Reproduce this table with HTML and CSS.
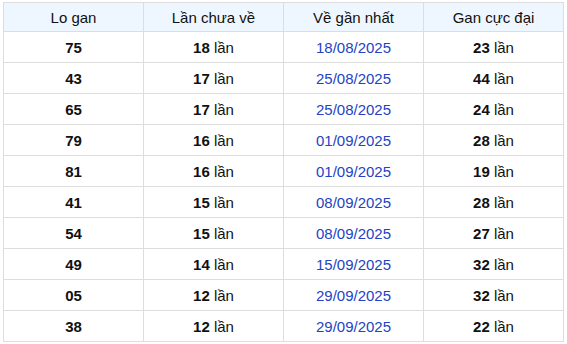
FILE: index.html
```html
<!DOCTYPE html>
<html lang="vi">
<head>
    <meta charset="UTF-8">
    <meta name="viewport" content="width=device-width, initial-scale=1.0">
    <title>Lo gan</title>
    <link rel="stylesheet" href="styles.css">
</head>
<body>
    <div class="wrap">
        <table class="gan-table">
            <thead>
                <tr>
                    <th>Lo gan</th>
                    <th>Lần chưa về</th>
                    <th>Về gần nhất</th>
                    <th>Gan cực đại</th>
                </tr>
            </thead>
            <tbody>
                <tr><td><b>75</b></td><td><b>18</b> lần</td><td class="date">18/08/2025</td><td><b>23</b> lần</td></tr>
                <tr><td><b>43</b></td><td><b>17</b> lần</td><td class="date">25/08/2025</td><td><b>44</b> lần</td></tr>
                <tr><td><b>65</b></td><td><b>17</b> lần</td><td class="date">25/08/2025</td><td><b>24</b> lần</td></tr>
                <tr><td><b>79</b></td><td><b>16</b> lần</td><td class="date">01/09/2025</td><td><b>28</b> lần</td></tr>
                <tr><td><b>81</b></td><td><b>16</b> lần</td><td class="date">01/09/2025</td><td><b>19</b> lần</td></tr>
                <tr><td><b>41</b></td><td><b>15</b> lần</td><td class="date">08/09/2025</td><td><b>28</b> lần</td></tr>
                <tr><td><b>54</b></td><td><b>15</b> lần</td><td class="date">08/09/2025</td><td><b>27</b> lần</td></tr>
                <tr><td><b>49</b></td><td><b>14</b> lần</td><td class="date">15/09/2025</td><td><b>32</b> lần</td></tr>
                <tr><td><b>05</b></td><td><b>12</b> lần</td><td class="date">29/09/2025</td><td><b>32</b> lần</td></tr>
                <tr><td><b>38</b></td><td><b>12</b> lần</td><td class="date">29/09/2025</td><td><b>22</b> lần</td></tr>
            </tbody>
        </table>
    </div>
</body>
</html>
```

FILE: styles.css
```css
body {
    margin: 0;
    font-family: "Liberation Sans", Arial, sans-serif;
    background-color: #fff;
    color: #111;
}

.wrap {
    padding: 2px 3px;
}

.gan-table {
    width: 561px;
    border-collapse: collapse;
    table-layout: fixed;
    font-size: 15px;
}

.gan-table th,
.gan-table td {
    border: 1px solid #ddd;
    text-align: center;
    padding: 0;
}

.gan-table th {
    height: 28px;
    font-weight: normal;
    background-color: #eef7ff;
}

.gan-table td {
    height: 30px;
}

.gan-table b {
    font-weight: bold;
}

.date {
    color: #2443c4;
}
```
